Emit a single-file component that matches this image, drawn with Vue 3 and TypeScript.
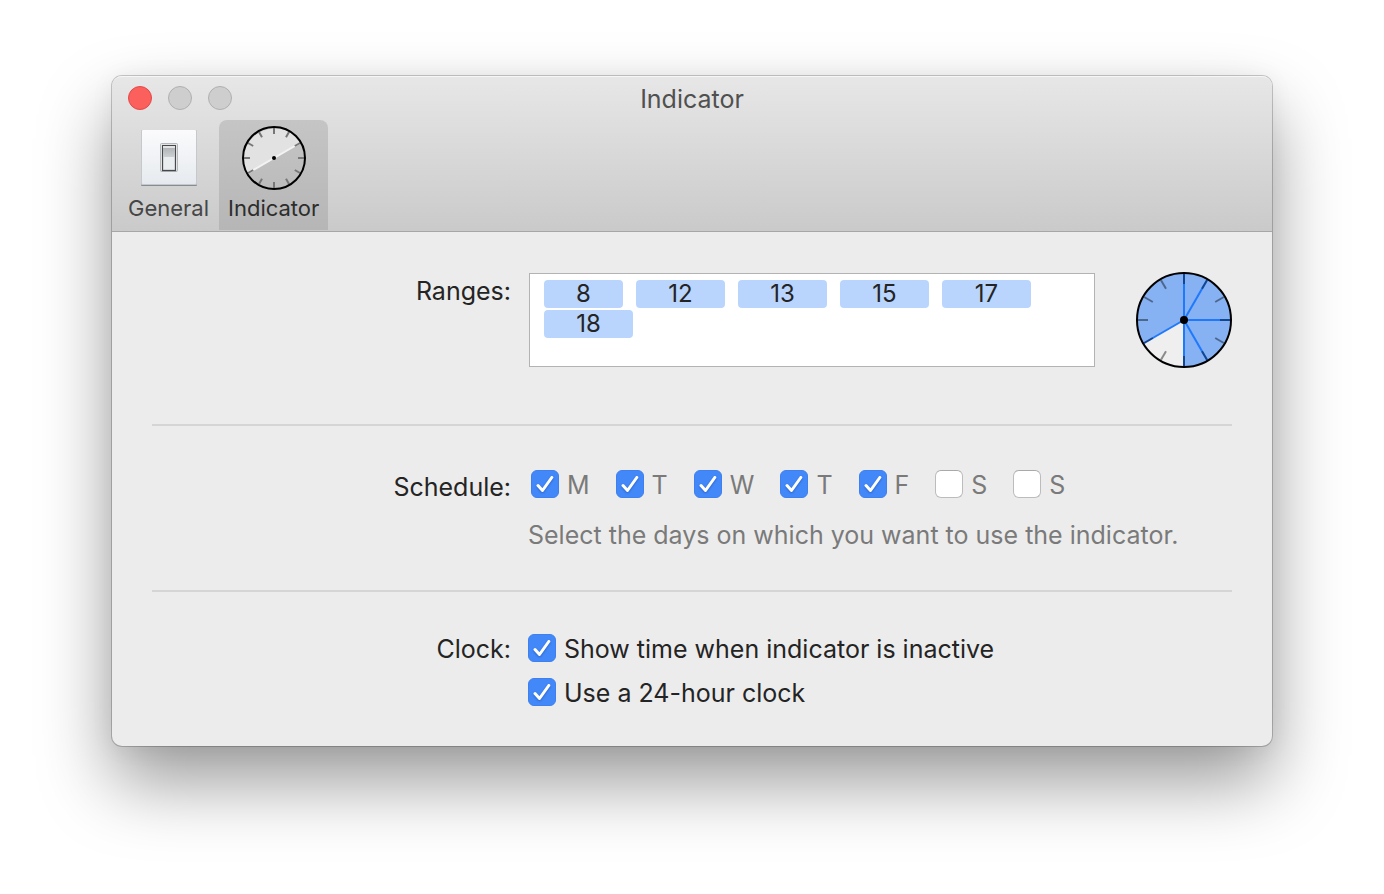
<script setup lang="ts">
import { ref } from 'vue'

interface Option {
  id: string
  label: string
  on: boolean
}

const ranges = ref<number[]>([8, 12, 13, 15, 17, 18])
const draft = ref('')

const days = ref<Option[]>([
  { id: 'mon', label: 'M', on: true },
  { id: 'tue', label: 'T', on: true },
  { id: 'wed', label: 'W', on: true },
  { id: 'thu', label: 'T', on: true },
  { id: 'fri', label: 'F', on: true },
  { id: 'sat', label: 'S', on: false },
  { id: 'sun', label: 'S', on: false },
])

const clockOptions = ref<Option[]>([
  { id: 'show-time', label: 'Show time when indicator is inactive', on: true },
  { id: 'use-24', label: 'Use a 24-hour clock', on: true },
])

const ticks = Array.from({ length: 12 }, (_, i) => i * 30)
const hands = [0, 30, 90, 150, 180, 240]
</script>

<template>
  <div class="desktop">
    <main class="window">
      <header class="toolbar">
        <div class="titlebar">
          <div class="lights">
            <button class="light close" type="button" aria-label="Close"></button>
            <button class="light" type="button" aria-label="Minimize" disabled></button>
            <button class="light" type="button" aria-label="Zoom" disabled></button>
          </div>
          <h1>Indicator</h1>
        </div>
        <nav class="tabs">
          <button class="tab" type="button">
            <svg width="64" height="64" viewBox="0 0 64 64" aria-hidden="true">
              <defs>
                <linearGradient id="plate" x1="0" y1="0" x2="0" y2="1">
                  <stop offset="0" stop-color="#fbfbfd" />
                  <stop offset="1" stop-color="#e6eaee" />
                </linearGradient>
                <linearGradient id="rocker" x1="0" y1="0" x2="0" y2="1">
                  <stop offset="0" stop-color="#b2b5b8" />
                  <stop offset="1" stop-color="#ccd0d3" />
                </linearGradient>
              </defs>
              <rect x="4" y="5" width="56" height="55" rx="1" fill="#878c92" />
              <rect x="4" y="4" width="56" height="55" rx="1" fill="#c5c9cd" />
              <rect x="5" y="4" width="54" height="54" rx="1" fill="url(#plate)" />
              <rect x="23" y="17" width="18" height="29" rx="2" fill="#b4b8bc" />
              <rect x="24" y="18" width="16" height="27" rx="1" fill="#ffffff" />
              <rect x="25.5" y="19.500" width="13" height="25" fill="#e9edf0" stroke="#46484b" stroke-width="1.300" />
              <rect x="26" y="20" width="12" height="2" fill="#e2e3e4" />
              <rect x="26" y="22" width="12" height="9" fill="url(#rocker)" />
            </svg>
            <span>General</span>
          </button>
          <button class="tab active" type="button" aria-current="page">
            <svg width="64" height="64" viewBox="0 0 64 64" aria-hidden="true">
              <path d="M5.200 47.500A31 31 0 0 1 58.800 16.500Z" fill="#e2e2e2" />
              <path d="M5.200 47.500L58.800 16.500" stroke="#f3f3f3" stroke-width="2" />
              <path v-for="a in ticks" :key="a" d="M32 2V8" :transform="`rotate(${a} 32 32)`" stroke="#777777" stroke-width="2" />
              <circle cx="32" cy="32" r="31" fill="none" stroke="#000000" stroke-width="2" />
              <circle cx="32" cy="32" r="2" />
            </svg>
            <span>Indicator</span>
          </button>
        </nav>
      </header>

      <form class="settings" @submit.prevent>
        <section class="row ranges-row">
          <label class="name" for="ranges">Ranges:</label>
          <div class="ranges">
            <div class="token-field">
              <span v-for="hour in ranges" :key="hour" class="token" :class="{ short: hour < 10 }">{{ hour }}</span>
              <input id="ranges" v-model="draft" type="text" autocomplete="off" />
            </div>
            <svg class="dial" width="96" height="96" viewBox="0 0 96 96" role="img" aria-label="Active hours">
              <circle cx="48" cy="48" r="47" fill="#efefef" />
              <path d="M48 48V95A47 47 0 1 0 7.300 71.500Z" fill="#86b1f2" />
              <path v-for="a in hands" :key="`h${a}`" d="M48 48V1" :transform="`rotate(${a} 48 48)`" stroke="#1f79fb" stroke-width="2" />
              <path v-for="a in ticks" :key="a" d="M48 2V12" :transform="`rotate(${a} 48 48)`" stroke="#000000" stroke-opacity="0.42" stroke-width="2" />
              <circle cx="48" cy="48" r="47" fill="none" stroke="#000000" stroke-width="2" />
              <circle cx="48" cy="48" r="4" />
            </svg>
          </div>
        </section>

        <section class="row schedule-row" role="group" aria-labelledby="schedule-name">
          <span id="schedule-name" class="name">Schedule:</span>
          <div>
            <div class="days">
              <label v-for="day in days" :key="day.id" class="option">
                <span class="check">
                  <input v-model="day.on" type="checkbox" />
                  <svg width="28" height="28" viewBox="0 0 28 28" aria-hidden="true"><path d="M7 15.500L11.500 20.500L20.800 7.500" /></svg>
                </span>
                <span class="text">{{ day.label }}</span>
              </label>
            </div>
            <p class="hint">Select the days on which you want to use the indicator.</p>
          </div>
        </section>

        <section class="row clock-row" role="group" aria-labelledby="clock-name">
          <span id="clock-name" class="name">Clock:</span>
          <div class="stack">
            <label v-for="option in clockOptions" :key="option.id" class="option">
              <span class="check">
                <input v-model="option.on" type="checkbox" />
                <svg width="28" height="28" viewBox="0 0 28 28" aria-hidden="true"><path d="M7 15.500L11.500 20.500L20.800 7.500" /></svg>
              </span>
              <span class="text">{{ option.label }}</span>
            </label>
          </div>
        </section>
      </form>
    </main>
  </div>
</template>

<style>
body {
  background: #ffffff;
}
</style>

<style scoped>
.desktop {
  box-sizing: border-box;
  min-height: 100vh;
  padding: 76px 112px;
}

.window {
  border-radius: 10px;
  background: #ececec;
  box-shadow:
    0 0 0 1px rgba(0, 0, 0, 0.2),
    0 36px 72px rgba(0, 0, 0, 0.4),
    0 2px 24px rgba(0, 0, 0, 0.06);
  color: #242424;
  font-family: Inter, "Liberation Sans", sans-serif;
  font-size: 25px;
  line-height: 28px;
}

.toolbar {
  border-bottom: 1px solid #a6a6a6;
  border-radius: 10px 10px 0 0;
  background: linear-gradient(#e7e7e7, #cacaca);
  box-shadow: inset 0 2px 0 -1px #f6f6f6;
}

.titlebar {
  display: grid;
  grid-template-columns: 1fr auto 1fr;
  align-items: center;
  height: 44px;
  padding: 0 16px;
}

.lights {
  display: flex;
  gap: 16px;
}

.light {
  width: 24px;
  height: 24px;
  padding: 0;
  border: 1px solid #b0b0b0;
  border-radius: 50%;
  background: #cecece;
}

.close {
  border-color: #e2484a;
  background: #fc605c;
}

h1 {
  margin: 0;
  padding-top: 2px;
  color: #505050;
  font-size: 25px;
  font-weight: 400;
  line-height: 28px;
}

.tabs {
  display: flex;
  gap: 1px;
  padding: 0 7px 1px;
}

.tab {
  display: flex;
  flex-direction: column;
  align-items: center;
  gap: 4px;
  height: 110px;
  padding: 6px 9px 0;
  border: 0;
  border-radius: 8px 8px 0 0;
  background: none;
  color: #464646;
  font: inherit;
  font-size: 22px;
}

.active {
  background: linear-gradient(#c5c5c5, #b6b6b6);
  color: #2d2d2d;
}

.settings {
  padding: 0 40px;
}

.row {
  display: grid;
  grid-template-columns: 359fr 721fr;
}

.row + .row {
  border-top: 2px solid #d5d5d5;
}

.name {
  text-align: right;
}

.row > div {
  padding-left: 17px;
}

.ranges-row {
  padding: 40px 0 56px;
}

.ranges-row .name {
  padding-top: 5px;
}

.row > .ranges {
  display: flex;
  justify-content: space-between;
  gap: 41px;
  padding-left: 18px;
}

.token-field {
  box-sizing: border-box;
  display: flex;
  flex: 1;
  flex-wrap: wrap;
  align-content: flex-start;
  gap: 2px 13px;
  height: 94px;
  margin-top: 1px;
  padding: 6px 14px;
  border: 1px solid #b3b3b3;
  background: #ffffff;
  font-size: 24px;
}

.token {
  width: 89px;
  border-radius: 4px;
  background: #b9d5fd;
  text-align: center;
}

.short {
  width: 79px;
}

.token-field input {
  flex: 1;
  min-width: 120px;
  height: 28px;
  padding: 0;
  border: 0;
  outline: 0;
  background: none;
  color: inherit;
  font: inherit;
}

.dial {
  flex: none;
}

.schedule-row {
  padding: 44px 0 41px;
}

.schedule-row .name {
  padding-top: 3px;
}

.days {
  display: flex;
  gap: 26px;
  padding-left: 3px;
  color: #7a7a7a;
}

.option {
  display: flex;
  align-items: flex-start;
  gap: 8px;
}

.text {
  padding-top: 1px;
}

.check {
  display: grid;
  flex: none;
}

.check input {
  grid-area: 1 / 1;
  width: 28px;
  height: 28px;
  margin: 0;
  border: 1px solid #bcbcbc;
  border-top-color: #a9a9a9;
  border-radius: 6px;
  background: #ffffff;
  appearance: none;
}

.check input:checked {
  border-color: #3e80f0;
  background: #4388f8;
}

.check svg {
  grid-area: 1 / 1;
  visibility: hidden;
  fill: none;
  stroke: #ffffff;
  stroke-width: 3;
  stroke-linecap: round;
  stroke-linejoin: round;
  filter: drop-shadow(0 1px 1px rgba(0, 40, 130, 0.4));
  pointer-events: none;
}

.check input:checked + svg {
  visibility: visible;
}

.hint {
  margin: 22px 0 0;
  color: #7a7a7a;
}

.clock-row {
  padding: 42px 0 39px;
}

.clock-row .name {
  padding-top: 1px;
}

.stack {
  display: grid;
  gap: 15px;
}
</style>
